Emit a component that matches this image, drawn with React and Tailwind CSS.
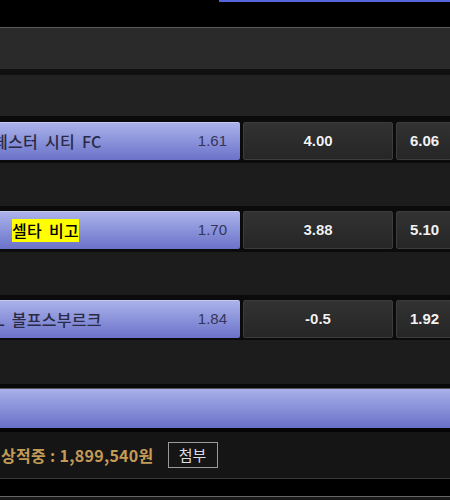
import React from 'react';

// odds rows shown in the slip
const rows = [
  { id: 1, team: "맨체스터 시티 FC", shift: "-ml-[22px]", home: "1.61", draw: "4.00", away: "6.06" },
  { id: 2, team: "셀타 비고", shift: "ml-[12px]", highlight: true, home: "1.70", draw: "3.88", away: "5.10" },
  { id: 3, team: "VfL 볼프스부르크", shift: "-ml-[20px]", home: "1.84", draw: "-0.5", away: "1.92" },
];

const Band = () => (
  <div className="h-[51px] flex flex-col bg-[#0b0b0b]">
    <div className="h-[3px]" />
    <div className="h-[43px] bg-[#1c1c1c]" />
  </div>
);

const OddsRow = ({ row }) => (
  <div className="flex h-[38px] gap-[3px] bg-[#0b0b0b]">
    {/* home side, selected */}
    <div className="w-[240px] shrink-0 flex items-center overflow-hidden border-t border-[#c4c9f2] bg-gradient-to-b from-[#abb2ea] to-[#6b72c9] rounded-r-[2px]">
      <span
        className={`${row.shift} whitespace-nowrap text-[16px] leading-[23px] font-medium tracking-[0.3px] [word-spacing:3px] text-[#2a2a44] ${row.highlight ? 'bg-[#ffff00] text-black' : ''}`}
        style={{ fontFamily: '"Noto Sans CJK KR", sans-serif' }}
      >
        {row.team}
      </span>
      <span className="ml-auto pr-[13px] text-[15px] text-[#35355a]">{row.home}</span>
    </div>
    <div className="w-[150px] shrink-0 flex items-center justify-center rounded-[2px] border border-[#3c3c3c] bg-gradient-to-b from-[#323232] to-[#262626] text-[15px] font-bold text-[#f2f2f2] [text-shadow:0_0_1px_#000]">
      {row.draw}
    </div>
    <div className="w-[70px] shrink-0 flex items-center pl-[13px] rounded-[2px] border border-[#3c3c3c] bg-gradient-to-b from-[#323232] to-[#262626] text-[15px] font-bold text-[#f2f2f2]">
      {row.away}
    </div>
  </div>
);

const App = () => {
  return (
    <div
      className="w-[450px] h-[500px] overflow-hidden bg-black flex flex-col"
      style={{ fontFamily: '"Liberation Sans", "Noto Sans CJK KR", sans-serif' }}
    >
      {/* top strip with tab indicator */}
      <div className="h-[27px] shrink-0">
        <div className="ml-[219px] h-[2px] bg-[#5566dd]" />
      </div>
      <div className="h-px bg-[#5a5a5a]" />
      <div className="h-[41px] shrink-0 bg-[#2a2a2a]" />
      <div className="h-[6px] shrink-0 bg-[#101010]" />
      <div className="h-[41px] shrink-0 bg-[#222222]" />
      <div className="h-[6px] shrink-0 bg-[#0b0b0b]" />

      <OddsRow row={rows[0]} />
      <Band />
      <OddsRow row={rows[1]} />
      <Band />
      <OddsRow row={rows[2]} />

      <div className="h-[2px] shrink-0 bg-[#0b0b0b]" />
      <div className="h-[44px] shrink-0 bg-[#1c1c1c]" />
      <div className="h-[4px] shrink-0 bg-[#080808]" />
      <div className="h-px shrink-0 bg-[#555]" />
      {/* total bar */}
      <div className="h-[39px] shrink-0 bg-gradient-to-b from-[#a9b0e8] to-[#6a70c8]" />
      <div className="h-[4px] shrink-0 bg-[#050505]" />

      {/* footer */}
      <div className="h-[46px] shrink-0 bg-[#151515] flex items-center gap-[14px] pl-[1px]">
        <span
          className="text-[16px] font-bold text-[#c49a57] tracking-[0.3px]"
          style={{ fontFamily: '"Noto Sans CJK KR", sans-serif' }}
        >
          상적중 : 1,899,540원
        </span>
        <button
          className="w-[50px] h-[26px] border border-[#9a9a9a] text-[15px] text-[#dddddd] flex items-center justify-center"
          style={{ fontFamily: '"Noto Sans CJK KR", sans-serif' }}
        >
          첨부
        </button>
      </div>
      <div className="h-px shrink-0 bg-[#3a3a3a]" />
      <div className="h-[17px] shrink-0 bg-black" />
      <div className="h-px shrink-0 bg-[#666]" />
      <div className="flex-1 bg-[#1a1a1a]" />
    </div>
  );
};

export default App;
